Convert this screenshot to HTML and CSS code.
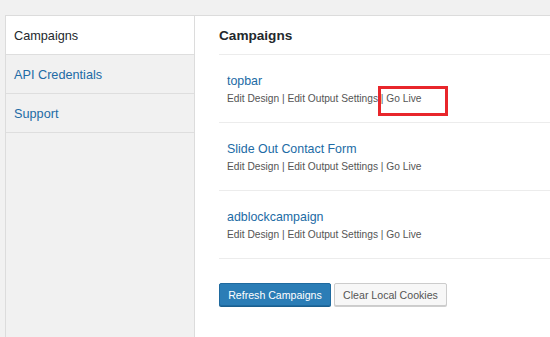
FILE: index.html
```html
<!DOCTYPE html>
<html>
<head>
<meta charset="utf-8">
<link rel="stylesheet" href="styles.css">
</head>
<body>
<div class="wrap">
  <nav class="sidebar">
    <div class="tab active">Campaigns</div>
    <div class="tab">API Credentials</div>
    <div class="tab">Support</div>
  </nav>
  <main class="main">
    <h2 class="heading">Campaigns</h2>
    <div class="row">
      <div class="title">topbar</div>
      <div class="actions">Edit Design | Edit Output Settings | Go Live</div>
      <div class="highlight"></div>
    </div>
    <div class="row">
      <div class="title">Slide Out Contact Form</div>
      <div class="actions">Edit Design | Edit Output Settings | Go Live</div>
    </div>
    <div class="row">
      <div class="title">adblockcampaign</div>
      <div class="actions">Edit Design | Edit Output Settings | Go Live</div>
    </div>
    <div class="buttons">
      <button class="btn primary">Refresh Campaigns</button>
      <button class="btn secondary">Clear Local Cookies</button>
    </div>
  </main>
</div>
</body>
</html>
```

FILE: styles.css
```css
html, body {
  margin: 0;
  padding: 0;
  height: 100%;
}
body {
  background: #f1f1f1;
  font-family: "Liberation Sans", Arial, sans-serif;
  overflow: hidden;
}
.wrap {
  display: flex;
  margin: 15px 0 0 5px;
  height: 322px;
  border-top: 1px solid #dcdcdc;
  border-left: 1px solid #dcdcdc;
}
.sidebar {
  width: 188px;
  flex: none;
  background: #f1f1f1;
  border-right: 1px solid #dcdcdc;
}
.tab {
  height: 37px;
  padding-top: 1px;
  line-height: 39px;
  padding-left: 8px;
  font-size: 12.7px;
  color: #216ba5;
  border-bottom: 1px solid #dedede;
}
.tab.active {
  background: #fff;
  color: #23282d;
}
.main {
  flex: 1;
  background: #fff;
  padding-left: 24px;
}
.heading {
  margin: 0;
  height: 38px;
  line-height: 39px;
  font-size: 13.6px;
  font-weight: bold;
  color: #23282d;
  border-bottom: 1px solid #ececec;
}
.row {
  position: relative;
  height: 67px;
  border-bottom: 1px solid #ececec;
  padding-left: 8px;
}
.title {
  padding-top: 17px;
  height: 18px;
  line-height: 18px;
  font-size: 12.4px;
  color: #216ba5;
}
.actions {
  margin-top: 1px;
  height: 16px;
  line-height: 16px;
  font-size: 10.2px;
  color: #555;
}
.highlight {
  position: absolute;
  left: 159px;
  top: 31px;
  width: 64px;
  height: 24px;
  border: 3px solid #e8262b;
}
.buttons {
  display: flex;
  gap: 3px;
  margin-top: 24px;
}
.btn {
  height: 23px;
  padding: 0;
  font-family: "Liberation Sans", Arial, sans-serif;
  font-size: 10.6px;
  border-radius: 2px;
  box-sizing: border-box;
  cursor: pointer;
}
.primary {
  width: 112px;
  background: #2b7db6;
  border: 1px solid #1f6a9f;
  color: #fff;
  box-shadow: 0 1px 0 #1b5f8f;
}
.secondary {
  width: 113px;
  background: #f7f7f7;
  border: 1px solid #cccccc;
  color: #555;
  box-shadow: 0 1px 0 #cfcfcf;
}
```
